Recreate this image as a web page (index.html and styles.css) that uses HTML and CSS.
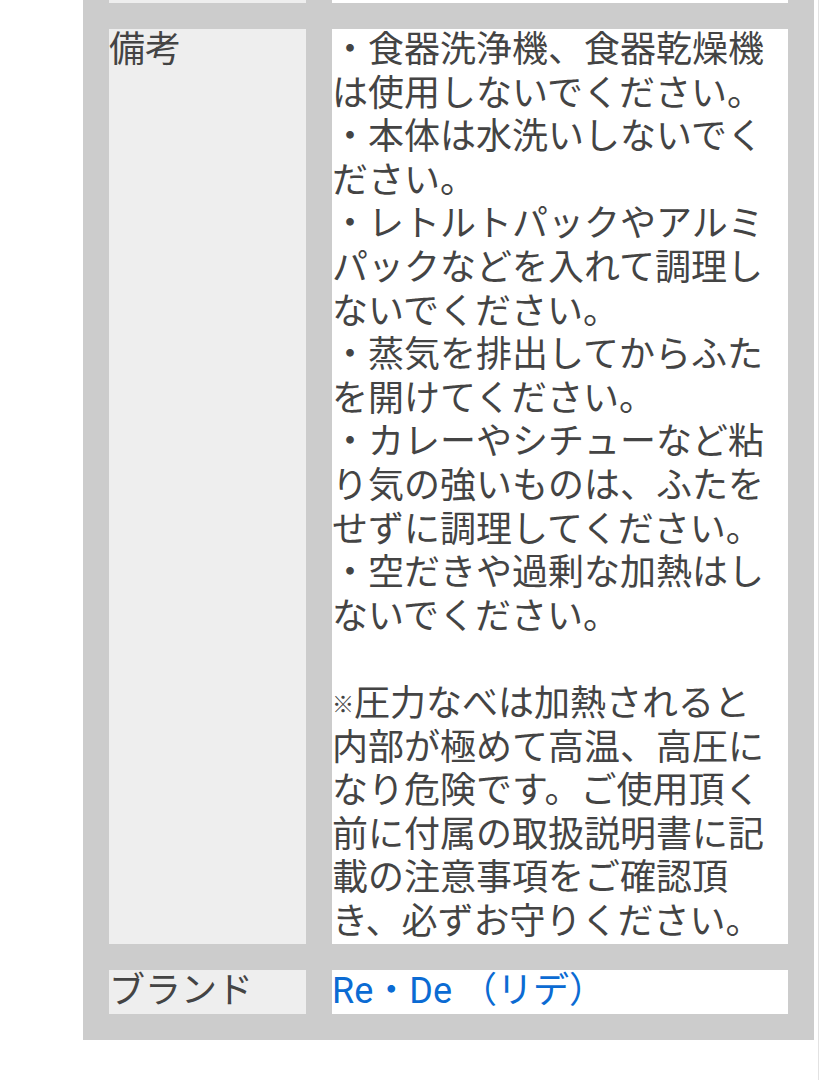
FILE: index.html
```html
<!DOCTYPE html>
<html lang="ja">
<head>
    <meta charset="UTF-8">
    <meta name="viewport" content="width=device-width, initial-scale=1.0">
    <title>商品詳細</title>
    <link rel="stylesheet" href="styles.css">
</head>
<body>
    <div class="pagina">
        <div class="caja">
            <table class="spec">
                <tr class="fila-previa">
                    <th></th>
                    <td></td>
                </tr>
                <tr>
                    <th>備考</th>
                    <td>・食器洗浄機、食器乾燥機は使用しないでください。<br>
                        ・本体は水洗いしないでください。<br>
                        ・レトルトパックやアルミパックなどを入れて調理しないでください。<br>
                        ・蒸気を排出してからふたを開けてください。<br>
                        ・カレーやシチューなど粘り気の強いものは、ふたをせずに調理してください。<br>
                        ・空だきや過剰な加熱はしないでください。<br>
                        <br>
                        <span class="kome">※</span>圧力なべは加熱されると内部が極めて高温、高圧になり危険です。ご使用頂く前に付属の取扱説明書に記載の注意事項をご確認頂き、必ずお守りください。</td>
                </tr>
                <tr>
                    <th>ブランド</th>
                    <td><a href="#">Re・De （リデ）</a></td>
                </tr>
            </table>
        </div>
    </div>
</body>
</html>
```

FILE: styles.css
```css
body {
    margin: 0;
    font-family: Roboto, "Noto Sans CJK JP", sans-serif;
    color: #444;
    background: #fff;
}
.pagina {
    width: 819px;
    height: 1080px;
    border-right: 1px solid #e2e2e2;
    padding-left: 83px;
    box-sizing: border-box;
    overflow: hidden;
}
.caja {
    width: 731px;
    background: #ccc;
    margin-top: -26px; /* la fila anterior queda cortada arriba */
}
.spec {
    border-collapse: separate;
    border-spacing: 26px;
    font-size: 36px;
    line-height: 43.6px;
}
.spec th,
.spec td {
    padding: 0;
    vertical-align: top;
    text-align: left;
}
.spec th {
    width: 197px;
    background: #eee;
    font-weight: normal;
}
.spec td {
    width: 448px;
    padding-right: 8px;
    background: #fff;
}
.fila-previa th,
.fila-previa td {
    height: 3px;
    line-height: 0;
}
/* el signo de referencia sale más pequeño en el original */
.kome {
    font-size: 22px;
    vertical-align: 4px;
}
.spec a {
    color: #0b6bd3;
    text-decoration: none;
}
```
